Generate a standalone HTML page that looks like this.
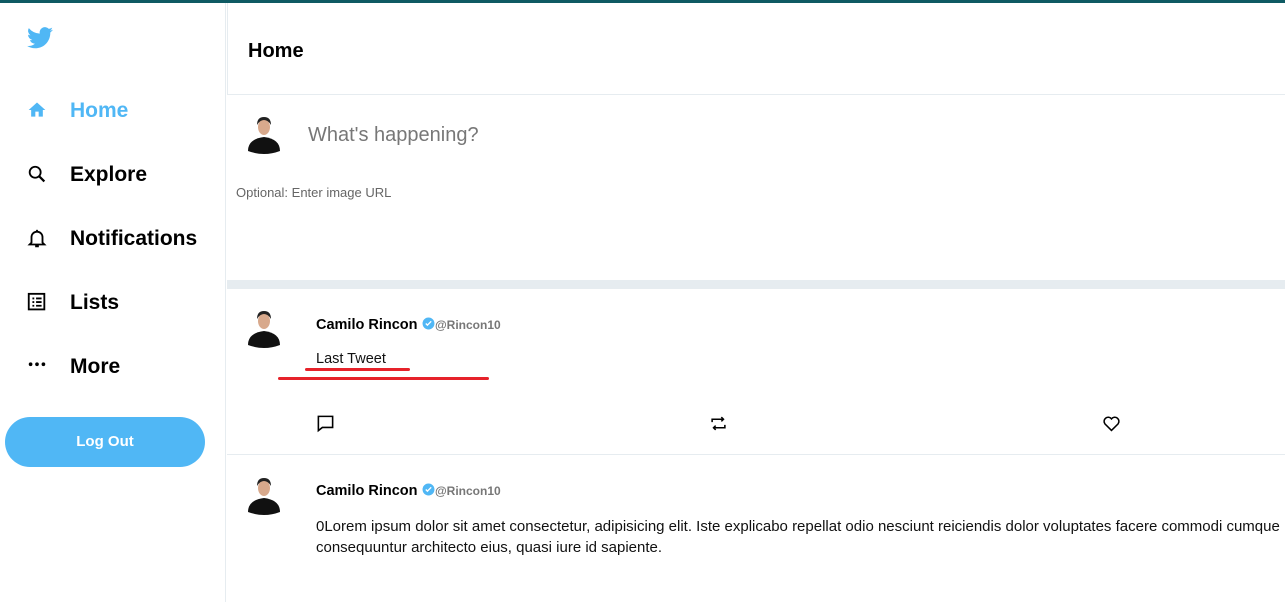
<!DOCTYPE html>
<html><head><meta charset="utf-8"><style>
*{margin:0;padding:0;box-sizing:border-box}
body{width:1285px;height:602px;overflow:hidden;background:#fff;font-family:"Liberation Sans",sans-serif;position:relative}
.top{position:absolute;left:0;top:0;width:1285px;height:3px;background:#0e5a63}
.side{position:absolute;left:0;top:3px;width:226px;height:599px;border-right:1px solid #e6ecf0}
.nav{position:absolute;left:26px;font-weight:bold;font-size:21px;color:#000}
.nav svg{position:absolute;left:0;top:1px}
.nav span{position:absolute;left:44px;top:0;white-space:nowrap}
.btn{position:absolute;left:5px;top:417px;width:200px;height:50px;border-radius:25px;background:#50b7f5;color:#fff;font-weight:bold;font-size:15px;text-align:center;line-height:50px}
.abs{position:absolute}
.hline{position:absolute;left:227px;width:1058px;height:1px;background:#e6ecf0}
.name{font-weight:bold;font-size:14.5px;color:#000}
.handle{font-size:12px;color:#777;font-weight:bold}
</style></head><body>
<div class="top"></div>
<div class="side"></div>
<svg class="abs" style="left:27px;top:27px" width="26" height="22" viewBox="0 0 24 20"><path fill="#50b7f5" d="M24 2.4a9.8 9.8 0 0 1-2.8.8A4.9 4.9 0 0 0 23.3.4a9.9 9.9 0 0 1-3.1 1.2A4.9 4.9 0 0 0 11.8 6 14 14 0 0 1 1.7.9a4.9 4.9 0 0 0 1.5 6.6A4.9 4.9 0 0 1 1 6.9 4.9 4.9 0 0 0 4.9 11.8a4.9 4.9 0 0 1-2.2.1 4.9 4.9 0 0 0 4.6 3.4A9.9 9.9 0 0 1 0 17.3 14 14 0 0 0 7.5 19.5c9.1 0 14-7.5 14-14v-.6A10 10 0 0 0 24 2.4z"/></svg>
<div class="nav" style="top:99px;color:#50b7f5"><svg width="22" height="20" viewBox="0 0 24 24"><path fill="#50b7f5" d="M12 3 2 12h3v8h5v-6h4v6h5v-8h3z"/></svg><span>Home</span></div>
<div class="nav" style="top:163px"><svg width="22" height="22" viewBox="0 0 24 24"><circle cx="10" cy="9" r="6" fill="none" stroke="#000" stroke-width="2"/><path d="M14.5 13.5 20 19" stroke="#000" stroke-width="2.5"/></svg><span>Explore</span></div>
<div class="nav" style="top:227px"><svg width="22" height="22" viewBox="0 0 24 24"><path d="M6 16V10a6 6 0 0 1 12 0v6l2 2H4z M10 20h4" fill="none" stroke="#000" stroke-width="2"/><path d="M12 2v2" stroke="#000" stroke-width="2"/></svg><span>Notifications</span></div>
<div class="nav" style="top:291px"><svg width="22" height="22" viewBox="0 0 24 24"><rect x="3" y="2" width="17" height="17" fill="none" stroke="#000" stroke-width="2"/><path d="M7 7h2M11 7h6M7 11h2M11 11h6M7 15h2M11 15h6" stroke="#000" stroke-width="2"/></svg><span>Lists</span></div>
<div class="nav" style="top:355px"><svg width="22" height="22" viewBox="0 0 24 24"><circle cx="5" cy="9" r="2"/><circle cx="12" cy="9" r="2"/><circle cx="19" cy="9" r="2"/></svg><span>More</span></div>
<div class="btn">Log Out</div>

<div class="abs" style="left:227px;top:3px;width:1px;height:92px;background:#e6ecf0"></div>
<div class="abs" style="left:248px;top:40px;font-weight:bold;font-size:20px">Home</div>
<div class="hline" style="top:94px"></div>

<svg class="abs" style="left:246px;top:115px" width="36" height="40" viewBox="0 0 36 40"><path d="M2 36q0-12 16-14q16 2 16 14q-16 6-32 0z" fill="#111"/><ellipse cx="18" cy="12" rx="6" ry="8" fill="#d8a98c"/><path d="M11 10q0-8 7-8t7 8q-3-5-7-5t-7 5z" fill="#222"/></svg>
<div class="abs" style="left:308px;top:124px;font-size:20px;color:#777">What's happening?</div>
<div class="abs" style="left:236px;top:185px;font-size:13px;color:#666">Optional: Enter image URL</div>
<div class="abs" style="left:227px;top:280px;width:1058px;height:9px;background:#e6ecf0"></div>

<svg class="abs" style="left:246px;top:309px" width="36" height="40" viewBox="0 0 36 40"><path d="M2 36q0-12 16-14q16 2 16 14q-16 6-32 0z" fill="#111"/><ellipse cx="18" cy="12" rx="6" ry="8" fill="#d8a98c"/><path d="M11 10q0-8 7-8t7 8q-3-5-7-5t-7 5z" fill="#222"/></svg>
<div class="abs" style="left:316px;top:316px"><span class="name">Camilo Rincon</span> <svg width="13" height="13" viewBox="0 0 24 24" style="vertical-align:-1px"><circle cx="12" cy="12" r="11" fill="#50b7f5"/><path d="M7 12l3 3 7-7" stroke="#fff" stroke-width="2.5" fill="none"/></svg><span class="handle">@Rincon10</span></div>
<div class="abs" style="left:316px;top:351px;font-size:14.5px;color:#111">Last Tweet</div>
<div class="abs" style="left:305px;top:368px;width:105px;height:3px;background:#e6222a;border-radius:2px"></div>
<div class="abs" style="left:278px;top:377px;width:211px;height:3px;background:#e6222a;border-radius:2px"></div>
<svg class="abs" style="left:316px;top:414px" width="19" height="19" viewBox="0 0 24 24"><path d="M3 3h18v14H8l-5 4z" fill="none" stroke="#000" stroke-width="2"/></svg>
<svg class="abs" style="left:710px;top:415px" width="17" height="17" viewBox="0 0 24 24"><path d="M3 10V6h16M16 3l3 3-3 3M21 14v4H5M8 21l-3-3 3-3" fill="none" stroke="#000" stroke-width="2.2"/></svg>
<svg class="abs" style="left:1102px;top:415px" width="19" height="17" viewBox="0 0 24 22"><path d="M12 20 3.5 11.5a5 5 0 0 1 8.5-6.5 5 5 0 0 1 8.5 6.5z" fill="none" stroke="#000" stroke-width="2"/></svg>
<div class="hline" style="top:454px"></div>

<svg class="abs" style="left:246px;top:476px" width="36" height="40" viewBox="0 0 36 40"><path d="M2 36q0-12 16-14q16 2 16 14q-16 6-32 0z" fill="#111"/><ellipse cx="18" cy="12" rx="6" ry="8" fill="#d8a98c"/><path d="M11 10q0-8 7-8t7 8q-3-5-7-5t-7 5z" fill="#222"/></svg>
<div class="abs" style="left:316px;top:482px"><span class="name">Camilo Rincon</span> <svg width="13" height="13" viewBox="0 0 24 24" style="vertical-align:-1px"><circle cx="12" cy="12" r="11" fill="#50b7f5"/><path d="M7 12l3 3 7-7" stroke="#fff" stroke-width="2.5" fill="none"/></svg><span class="handle">@Rincon10</span></div>
<div class="abs" style="left:316px;top:516px;width:990px;font-size:15px;line-height:21px;color:#111;white-space:nowrap">0Lorem ipsum dolor sit amet consectetur, adipisicing elit. Iste explicabo repellat odio nesciunt reiciendis dolor voluptates facere commodi cumque<br>consequuntur architecto eius, quasi iure id sapiente.</div>
</body></html>
